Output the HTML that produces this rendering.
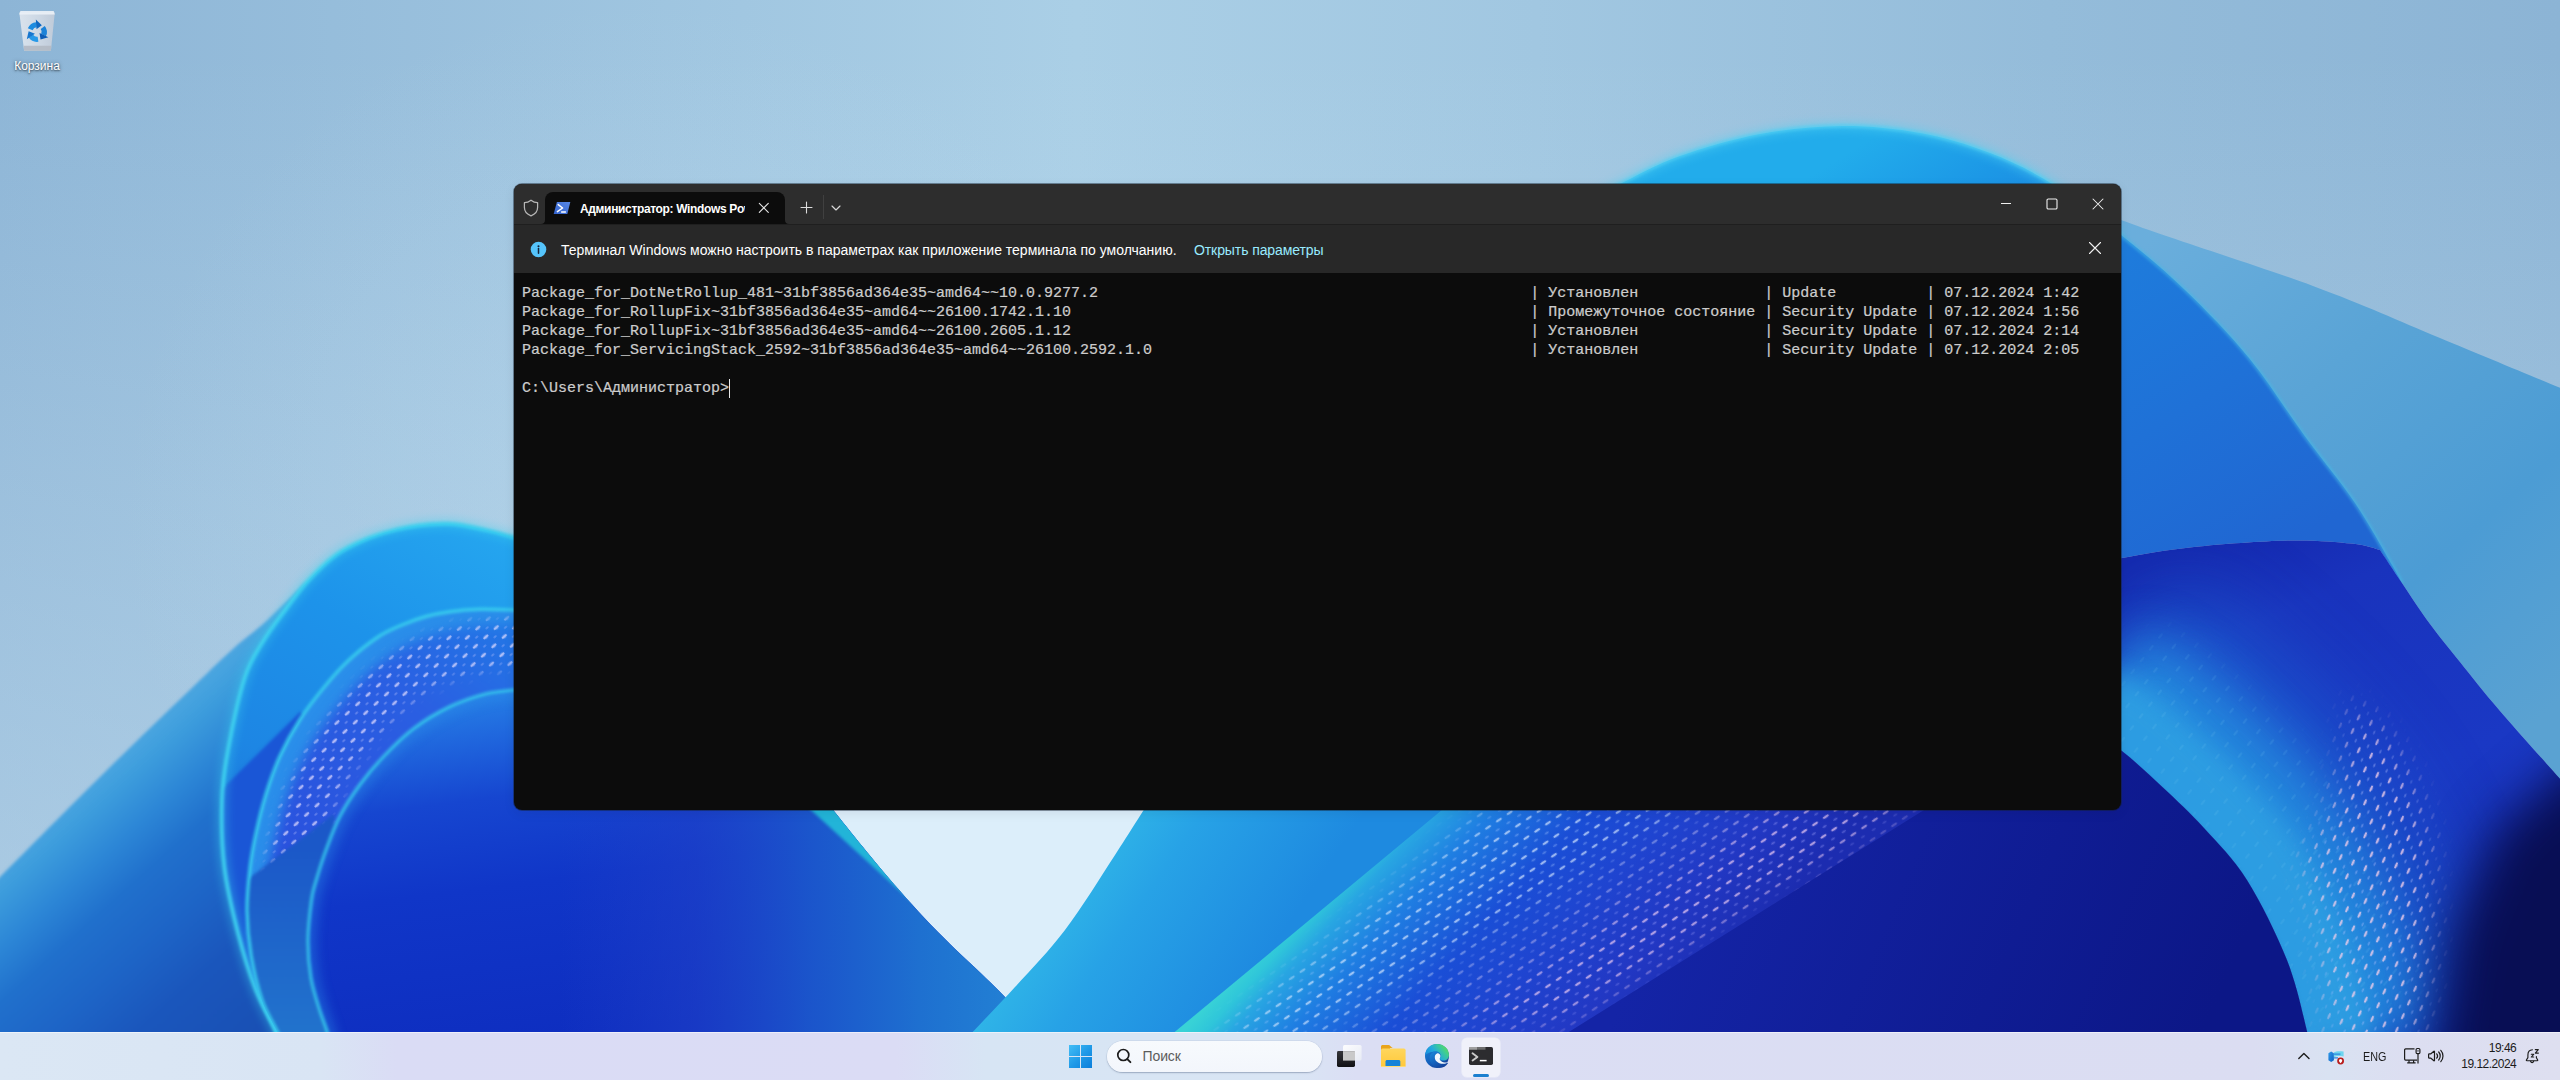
<!DOCTYPE html>
<html lang="ru">
<head>
<meta charset="utf-8">
<title>Рабочий стол</title>
<style>
*{box-sizing:border-box;margin:0;padding:0}
html,body{width:2560px;height:1080px;overflow:hidden;background:#9cc2de}
body{position:relative;font-family:"Liberation Sans","DejaVu Sans",sans-serif;color:#fff}
#wall{position:absolute;left:0;top:0;width:2560px;height:1080px;display:block}
/* desktop icon */
#bin{position:absolute;left:0;top:0;width:74px;height:80px}
#bin svg{position:absolute;left:17px;top:10px}
#bin .lbl{position:absolute;left:0;width:74px;top:59px;text-align:center;font-size:12px;line-height:15px;color:#fff;text-shadow:0 1px 2px rgba(0,0,0,.6),0 0 4px rgba(0,0,0,.35)}
/* window */
#win{position:absolute;left:514px;top:184px;width:1607px;height:626px;border-radius:8px;background:#0c0c0c;overflow:hidden;box-shadow:0 0 0 1px rgba(20,30,45,.45),0 3px 12px rgba(0,0,30,.08)}
#tb{position:absolute;left:0;top:0;width:100%;height:40px;background:#2d2d2d}
#ib{position:absolute;left:0;top:40px;width:100%;height:49px;background:#282828}
#term{position:absolute;left:8px;top:100px;-webkit-text-stroke:.22px #ccc;font-family:"Liberation Mono","DejaVu Sans Mono",monospace;font-size:15px;line-height:19px;color:#cccccc;white-space:pre}
/* taskbar */
#task{position:absolute;left:0;top:1032px;width:2560px;height:48px;background:linear-gradient(90deg,#dbe7f4 0%,#d9e5f4 12.500%,#dadcf5 15.500%,#dbdcf5 35%,#d7e5f4 38.500%,#d9e5f4 50.500%,#dbdef4 53%,#dbddf2 88%,#d9e2f2 91%,#dcdef1 94%,#dedff0 100%)}
</style>
</head>
<body>
<svg id="wall" viewBox="0 0 2560 1080" width="2560" height="1080">
<defs>
<linearGradient id="sky" x1="0" y1="0" x2="2560" y2="0" gradientUnits="userSpaceOnUse">
<stop offset="0" stop-color="#8db5d6"/><stop offset=".42" stop-color="#aacfe6"/><stop offset=".6" stop-color="#a1c7e1"/><stop offset=".8" stop-color="#94bcda"/><stop offset="1" stop-color="#8cb4d5"/>
</linearGradient>
<linearGradient id="skyv" x1="0" y1="50" x2="0" y2="1050" gradientUnits="userSpaceOnUse"><stop offset="0" stop-color="#d0e6f4" stop-opacity="0"/><stop offset="1" stop-color="#d0e6f4" stop-opacity=".5"/></linearGradient>
</defs>
<rect width="2560" height="1080" fill="url(#sky)"/><rect width="2560" height="1080" fill="url(#skyv)"/>
<defs>
<filter id="b2" color-interpolation-filters="sRGB" filterUnits="userSpaceOnUse" x="-100" y="-100" width="2760" height="1280"><feGaussianBlur stdDeviation="1.6"/></filter>
<filter id="b4" color-interpolation-filters="sRGB" filterUnits="userSpaceOnUse" x="-100" y="-100" width="2760" height="1280"><feGaussianBlur stdDeviation="4"/></filter>
<filter id="b6" color-interpolation-filters="sRGB" filterUnits="userSpaceOnUse" x="-100" y="-100" width="2760" height="1280"><feGaussianBlur stdDeviation="6"/></filter>
<filter id="b12" color-interpolation-filters="sRGB" filterUnits="userSpaceOnUse" x="-100" y="-100" width="2760" height="1280"><feGaussianBlur stdDeviation="12"/></filter>
<filter id="b25" color-interpolation-filters="sRGB" filterUnits="userSpaceOnUse" x="-100" y="-100" width="2760" height="1280"><feGaussianBlur stdDeviation="25"/></filter>
<filter id="b45" color-interpolation-filters="sRGB" filterUnits="userSpaceOnUse" x="-100" y="-100" width="2760" height="1280"><feGaussianBlur stdDeviation="45"/></filter>
<radialGradient id="skyglow" cx="640" cy="520" r="520" gradientUnits="userSpaceOnUse"><stop offset="0" stop-color="#c0dcee" stop-opacity=".35"/><stop offset="1" stop-color="#c0dcee" stop-opacity="0"/></radialGradient>
<linearGradient id="gA" x1="60" y1="700" x2="330" y2="1000" gradientUnits="userSpaceOnUse"><stop offset="0" stop-color="#6ab4e2" stop-opacity="0"/><stop offset=".1" stop-color="#56aee4" stop-opacity=".9"/><stop offset=".26" stop-color="#3c9cdc"/><stop offset=".36" stop-color="#2c86d6"/><stop offset=".46" stop-color="#2070cc"/><stop offset=".6" stop-color="#1d64c6"/><stop offset=".74" stop-color="#1a56bc"/><stop offset="1" stop-color="#184eb2"/></linearGradient>
<linearGradient id="gAin" x1="480" y1="520" x2="250" y2="900" gradientUnits="userSpaceOnUse"><stop offset="0" stop-color="#25a6ef"/><stop offset=".35" stop-color="#1d93ea"/><stop offset=".7" stop-color="#1d86e4"/><stop offset="1" stop-color="#1c72d8"/></linearGradient>
<linearGradient id="gC" x1="520" y1="620" x2="280" y2="960" gradientUnits="userSpaceOnUse"><stop offset="0" stop-color="#2278e6"/><stop offset=".3" stop-color="#2a5fe2"/><stop offset=".75" stop-color="#2a52de"/><stop offset="1" stop-color="#2248d2"/></linearGradient>
<linearGradient id="gClow" x1="0" y1="850" x2="0" y2="1030" gradientUnits="userSpaceOnUse"><stop offset="0" stop-color="#1b58c8"/><stop offset="1" stop-color="#2172cc"/></linearGradient>
<linearGradient id="gD" x1="500" y1="690" x2="545" y2="1040" gradientUnits="userSpaceOnUse"><stop offset="0" stop-color="#2680e6"/><stop offset=".12" stop-color="#2068de"/><stop offset=".3" stop-color="#1646d0"/><stop offset=".55" stop-color="#1036c8"/><stop offset="1" stop-color="#0e2ec0"/></linearGradient>
<linearGradient id="gDr" x1="560" y1="0" x2="1010" y2="0" gradientUnits="userSpaceOnUse"><stop offset="0" stop-color="#2040c8" stop-opacity="0"/><stop offset=".3" stop-color="#2042c8" stop-opacity=".55"/><stop offset=".55" stop-color="#1c58cc" stop-opacity=".9"/><stop offset=".8" stop-color="#1e70d0"/><stop offset="1" stop-color="#2280d4"/></linearGradient>
<linearGradient id="gE" x1="1010" y1="860" x2="1230" y2="1010" gradientUnits="userSpaceOnUse"><stop offset="0" stop-color="#3fcdea"/><stop offset=".12" stop-color="#33bde8"/><stop offset=".5" stop-color="#27a2e6"/><stop offset="1" stop-color="#1e8ae0"/></linearGradient>
<linearGradient id="gF" x1="1300" y1="905" x2="1560" y2="1145" gradientUnits="userSpaceOnUse"><stop offset="0" stop-color="#38d2d6"/><stop offset=".045" stop-color="#2fc6da"/><stop offset=".1" stop-color="#28a6e2"/><stop offset=".22" stop-color="#1f7ee2"/><stop offset=".42" stop-color="#1a4ed6"/><stop offset=".6" stop-color="#1f44d0"/><stop offset=".8" stop-color="#2238c4"/><stop offset="1" stop-color="#1c2cb0"/></linearGradient>
<linearGradient id="gNavy" x1="1700" y1="820" x2="2200" y2="1040" gradientUnits="userSpaceOnUse"><stop offset="0" stop-color="#1424a6"/><stop offset="1" stop-color="#0c1787"/></linearGradient>
<linearGradient id="gH" x1="1900" y1="120" x2="2200" y2="600" gradientUnits="userSpaceOnUse"><stop offset="0" stop-color="#22aceb"/><stop offset=".16" stop-color="#1c98e6"/><stop offset=".4" stop-color="#1e7cdc"/><stop offset="1" stop-color="#2066d2"/></linearGradient>
<linearGradient id="gG" x1="2150" y1="240" x2="2560" y2="700" gradientUnits="userSpaceOnUse"><stop offset="0" stop-color="#6aaedc"/><stop offset=".35" stop-color="#5aa4d6"/><stop offset=".7" stop-color="#4c9cd4"/><stop offset="1" stop-color="#5aa2d2"/></linearGradient>
<linearGradient id="gI" x1="2200" y1="540" x2="2420" y2="1040" gradientUnits="userSpaceOnUse"><stop offset="0" stop-color="#1428ae"/><stop offset=".18" stop-color="#1933bd"/><stop offset=".55" stop-color="#1a38c4"/><stop offset="1" stop-color="#1630b4"/></linearGradient>
</defs>
<rect width="2560" height="1080" fill="url(#skyglow)"/>
<path d="M800,800 L1180,800 L1010,1040 L990,1040 Z" fill="#dceefa"/>
<path d="M-40.0,917.0 C-33.3,910.3 -24.0,901.0 0.0,877.0 C24.0,853.0 71.2,805.3 104.0,773.0 C136.8,740.7 175.3,703.8 197.0,683.0 C218.7,662.2 223.2,657.7 234.0,648.0 C244.8,638.3 253.5,632.5 262.0,625.0 C270.5,617.5 277.8,610.0 285.0,603.0 C292.2,596.0 301.7,586.3 305.0,583.0 C305.5,582.7 302.8,585.7 308.0,581.0 C313.2,576.3 326.7,561.8 336.0,555.0 C345.3,548.2 354.8,544.0 364.0,540.0 C373.2,536.0 381.8,533.4 391.0,531.0 C400.2,528.6 408.8,526.7 419.0,525.5 C429.2,524.3 440.2,523.1 452.0,524.0 C463.8,524.9 477.0,528.0 490.0,531.0 C503.0,534.0 523.3,540.2 530.0,542.0 L530.0,1080.0 L-40.0,1080.0 Z" fill="url(#gA)" filter="url(#b2)"/>
<path d="M281.0,1050.0 C280.1,1046.8 279.8,1041.2 275.5,1031.0 C271.2,1020.8 261.8,1005.3 255.5,989.0 C249.2,972.7 243.2,953.3 238.0,933.0 C232.8,912.7 227.1,889.2 224.4,867.0 C221.7,844.8 221.4,819.5 222.0,800.0 C222.6,780.5 224.2,770.5 228.0,750.0 C231.8,729.5 239.0,695.3 245.0,677.0 C251.0,658.7 257.2,651.3 264.0,640.0 C270.8,628.7 278.7,618.8 286.0,609.0 C293.3,599.2 299.7,590.0 308.0,581.0 C316.3,572.0 326.7,561.8 336.0,555.0 C345.3,548.2 354.8,544.0 364.0,540.0 C373.2,536.0 381.8,533.4 391.0,531.0 C400.2,528.6 408.8,526.7 419.0,525.5 C429.2,524.3 440.2,523.1 452.0,524.0 C463.8,524.9 477.0,528.0 490.0,531.0 C503.0,534.0 523.3,540.2 530.0,542.0 L530.0,1040.0 Z" fill="url(#gAin)"/>
<clipPath id="cAin"><path d="M281.0,1050.0 C280.1,1046.8 279.8,1041.2 275.5,1031.0 C271.2,1020.8 261.8,1005.3 255.5,989.0 C249.2,972.7 243.2,953.3 238.0,933.0 C232.8,912.7 227.1,889.2 224.4,867.0 C221.7,844.8 221.4,819.5 222.0,800.0 C222.6,780.5 224.2,770.5 228.0,750.0 C231.8,729.5 239.0,695.3 245.0,677.0 C251.0,658.7 257.2,651.3 264.0,640.0 C270.8,628.7 278.7,618.8 286.0,609.0 C293.3,599.2 299.7,590.0 308.0,581.0 C316.3,572.0 326.7,561.8 336.0,555.0 C345.3,548.2 354.8,544.0 364.0,540.0 C373.2,536.0 381.8,533.4 391.0,531.0 C400.2,528.6 408.8,526.7 419.0,525.5 C429.2,524.3 440.2,523.1 452.0,524.0 C463.8,524.9 477.0,528.0 490.0,531.0 C503.0,534.0 523.3,540.2 530.0,542.0 L530.0,1040.0 Z"/></clipPath>
<g clip-path="url(#cAin)"><path d="M215,796 L300,712 L330,740 L330,1040 L215,1040 Z" fill="#1a56d6" filter="url(#b2)"/></g>
<path d="M281.0,1050.0 C280.1,1046.8 279.8,1041.2 275.5,1031.0 C271.2,1020.8 261.8,1005.3 255.5,989.0 C249.2,972.7 243.2,953.3 238.0,933.0 C232.8,912.7 227.1,889.2 224.4,867.0 C221.7,844.8 221.4,819.5 222.0,800.0 C222.6,780.5 224.2,770.5 228.0,750.0 C231.8,729.5 239.0,695.3 245.0,677.0 C251.0,658.7 257.2,651.3 264.0,640.0 C270.8,628.7 278.7,618.8 286.0,609.0 C293.3,599.2 299.7,590.0 308.0,581.0 C316.3,572.0 326.7,561.8 336.0,555.0 C345.3,548.2 354.8,544.0 364.0,540.0 C373.2,536.0 381.8,533.4 391.0,531.0 C400.2,528.6 408.8,526.7 419.0,525.5 C429.2,524.3 440.2,523.1 452.0,524.0 C463.8,524.9 477.0,528.0 490.0,531.0 C503.0,534.0 523.3,540.2 530.0,542.0" fill="none" stroke="#3ad0ee" stroke-width="11" opacity=".35" filter="url(#b4)"/>
<path d="M281.0,1050.0 C280.1,1046.8 279.8,1041.2 275.5,1031.0 C271.2,1020.8 261.8,1005.3 255.5,989.0 C249.2,972.7 243.2,953.3 238.0,933.0 C232.8,912.7 227.1,889.2 224.4,867.0 C221.7,844.8 221.4,819.5 222.0,800.0 C222.6,780.5 224.2,770.5 228.0,750.0 C231.8,729.5 239.0,695.3 245.0,677.0 C251.0,658.7 257.2,651.3 264.0,640.0 C270.8,628.7 278.7,618.8 286.0,609.0 C293.3,599.2 299.7,590.0 308.0,581.0 C316.3,572.0 326.7,561.8 336.0,555.0 C345.3,548.2 354.8,544.0 364.0,540.0 C373.2,536.0 381.8,533.4 391.0,531.0 C400.2,528.6 408.8,526.7 419.0,525.5 C429.2,524.3 440.2,523.1 452.0,524.0 C463.8,524.9 477.0,528.0 490.0,531.0 C503.0,534.0 523.3,540.2 530.0,542.0" fill="none" stroke="#3fd4f0" stroke-width="3.8" opacity=".95" filter="url(#b2)"/>
<path d="M285.0,1050.0 C283.7,1046.8 280.8,1039.3 277.0,1031.0 C273.2,1022.7 266.3,1012.7 262.0,1000.0 C257.7,987.3 253.5,969.8 251.0,955.0 C248.5,940.2 247.2,925.5 247.0,911.0 C246.8,896.5 248.5,881.0 250.0,868.0 C251.5,855.0 253.3,845.3 256.0,833.0 C258.7,820.7 262.0,806.8 266.0,794.0 C270.0,781.2 274.3,768.4 280.0,756.0 C285.7,743.6 292.8,730.8 300.0,719.5 C307.2,708.2 315.5,697.8 323.5,688.0 C331.5,678.2 338.9,669.5 348.0,661.0 C357.1,652.5 369.0,643.0 378.0,637.0 C387.0,631.0 394.0,628.4 402.0,625.0 C410.0,621.6 418.0,618.7 426.0,616.5 C434.0,614.3 441.0,612.9 450.0,611.7 C459.0,610.5 469.5,609.6 480.0,609.3 C490.5,609.0 504.7,609.7 513.0,610.0 C521.3,610.3 527.2,610.8 530.0,611.0 L530.0,1040.0 Z" fill="#2a8eea"/>
<clipPath id="cC"><path d="M285.0,1050.0 C283.7,1046.8 280.8,1039.3 277.0,1031.0 C273.2,1022.7 266.3,1012.7 262.0,1000.0 C257.7,987.3 253.5,969.8 251.0,955.0 C248.5,940.2 247.2,925.5 247.0,911.0 C246.8,896.5 248.5,881.0 250.0,868.0 C251.5,855.0 253.3,845.3 256.0,833.0 C258.7,820.7 262.0,806.8 266.0,794.0 C270.0,781.2 274.3,768.4 280.0,756.0 C285.7,743.6 292.8,730.8 300.0,719.5 C307.2,708.2 315.5,697.8 323.5,688.0 C331.5,678.2 338.9,669.5 348.0,661.0 C357.1,652.5 369.0,643.0 378.0,637.0 C387.0,631.0 394.0,628.4 402.0,625.0 C410.0,621.6 418.0,618.7 426.0,616.5 C434.0,614.3 441.0,612.9 450.0,611.7 C459.0,610.5 469.5,609.6 480.0,609.3 C490.5,609.0 504.7,609.7 513.0,610.0 C521.3,610.3 527.2,610.8 530.0,611.0 L530.0,1040.0 Z"/></clipPath>
<g clip-path="url(#cC)"><path d="M285.0,1050.0 C283.7,1046.8 280.8,1039.3 277.0,1031.0 C273.2,1022.7 266.3,1012.7 262.0,1000.0 C257.7,987.3 253.5,969.8 251.0,955.0 C248.5,940.2 247.2,925.5 247.0,911.0 C246.8,896.5 248.5,881.0 250.0,868.0 C251.5,855.0 253.3,845.3 256.0,833.0 C258.7,820.7 262.0,806.8 266.0,794.0 C270.0,781.2 274.3,768.4 280.0,756.0 C285.7,743.6 292.8,730.8 300.0,719.5 C307.2,708.2 315.5,697.8 323.5,688.0 C331.5,678.2 338.9,669.5 348.0,661.0 C357.1,652.5 369.0,643.0 378.0,637.0 C387.0,631.0 394.0,628.4 402.0,625.0 C410.0,621.6 418.0,618.7 426.0,616.5 C434.0,614.3 441.0,612.9 450.0,611.7 C459.0,610.5 469.5,609.6 480.0,609.3 C490.5,609.0 504.7,609.7 513.0,610.0 C521.3,610.3 527.2,610.8 530.0,611.0 L530.0,1040.0 Z" fill="url(#gC)" filter="url(#b6)" transform="translate(17,15)"/>
<pattern id="dotC" width="14" height="12" patternUnits="userSpaceOnUse" patternTransform="translate(3,2) rotate(-42)"><ellipse cx="4" cy="3" rx="3.2" ry="1.4" fill="#e2dcff"/><ellipse cx="11" cy="9" rx="2" ry="1" fill="#c4c8ff" opacity=".5"/></pattern>
<mask id="mC" maskUnits="userSpaceOnUse" x="0" y="0" width="2560" height="1080"><path d="M250.0,868.0 C251.0,862.2 253.3,845.3 256.0,833.0 C258.7,820.7 262.0,806.8 266.0,794.0 C270.0,781.2 274.3,768.4 280.0,756.0 C285.7,743.6 292.8,730.8 300.0,719.5 C307.2,708.2 315.5,697.8 323.5,688.0 C331.5,678.2 338.9,669.5 348.0,661.0 C357.1,652.5 369.0,643.0 378.0,637.0 C387.0,631.0 394.0,628.4 402.0,625.0 C410.0,621.6 418.0,618.7 426.0,616.5 C434.0,614.3 441.0,612.9 450.0,611.7 C459.0,610.5 469.5,609.6 480.0,609.3 C490.5,609.0 504.7,609.7 513.0,610.0 C521.3,610.3 527.2,610.8 530.0,611.0" fill="none" stroke="#fff" stroke-width="50" filter="url(#b6)" transform="translate(34,34)"/></mask>
<rect x="240" y="600" width="300" height="330" fill="url(#dotC)" mask="url(#mC)" opacity=".72"/><path d="M236,888 L334,814 L345,1050 L236,1050 Z" fill="url(#gClow)" filter="url(#b2)"/></g>
<path d="M285.0,1050.0 C283.7,1046.8 280.8,1039.3 277.0,1031.0 C273.2,1022.7 266.3,1012.7 262.0,1000.0 C257.7,987.3 253.5,969.8 251.0,955.0 C248.5,940.2 247.2,925.5 247.0,911.0 C246.8,896.5 248.5,881.0 250.0,868.0 C251.5,855.0 253.3,845.3 256.0,833.0 C258.7,820.7 262.0,806.8 266.0,794.0 C270.0,781.2 274.3,768.4 280.0,756.0 C285.7,743.6 292.8,730.8 300.0,719.5 C307.2,708.2 315.5,697.8 323.5,688.0 C331.5,678.2 338.9,669.5 348.0,661.0 C357.1,652.5 369.0,643.0 378.0,637.0 C387.0,631.0 394.0,628.4 402.0,625.0 C410.0,621.6 418.0,618.7 426.0,616.5 C434.0,614.3 441.0,612.9 450.0,611.7 C459.0,610.5 469.5,609.6 480.0,609.3 C490.5,609.0 504.7,609.7 513.0,610.0 C521.3,610.3 527.2,610.8 530.0,611.0" fill="none" stroke="#38cdee" stroke-width="3.4" opacity=".95" filter="url(#b2)"/>
<path d="M331.0,1050.0 C330.3,1046.8 328.8,1037.5 327.0,1031.0 C325.2,1024.5 322.7,1019.8 320.0,1011.0 C317.3,1002.2 313.0,989.8 311.0,978.0 C309.0,966.2 307.9,953.0 308.0,940.0 C308.1,927.0 310.2,909.8 311.5,900.0 C312.8,890.2 313.6,889.3 316.0,881.0 C318.4,872.7 322.0,860.8 326.0,850.0 C330.0,839.2 334.3,826.9 340.0,816.0 C345.7,805.1 352.7,794.5 360.0,784.5 C367.3,774.5 375.2,765.2 384.0,756.0 C392.8,746.8 402.2,737.2 413.0,729.0 C423.8,720.8 437.0,712.8 449.0,707.0 C461.0,701.2 474.3,696.8 485.0,694.0 C495.7,691.2 505.5,691.0 513.0,690.0 C520.5,689.0 527.2,688.3 530.0,688.0 L530.0,810.0 L829.0,805.0 C838.7,816.8 868.8,854.8 887.0,876.0 C905.2,897.2 918.3,911.8 938.0,932.0 C957.7,952.2 988.0,979.0 1005.0,997.0 C1022.0,1015.0 1034.2,1032.8 1040.0,1040.0 Z" fill="url(#gD)"/>
<clipPath id="cD"><path d="M331.0,1050.0 C330.3,1046.8 328.8,1037.5 327.0,1031.0 C325.2,1024.5 322.7,1019.8 320.0,1011.0 C317.3,1002.2 313.0,989.8 311.0,978.0 C309.0,966.2 307.9,953.0 308.0,940.0 C308.1,927.0 310.2,909.8 311.5,900.0 C312.8,890.2 313.6,889.3 316.0,881.0 C318.4,872.7 322.0,860.8 326.0,850.0 C330.0,839.2 334.3,826.9 340.0,816.0 C345.7,805.1 352.7,794.5 360.0,784.5 C367.3,774.5 375.2,765.2 384.0,756.0 C392.8,746.8 402.2,737.2 413.0,729.0 C423.8,720.8 437.0,712.8 449.0,707.0 C461.0,701.2 474.3,696.8 485.0,694.0 C495.7,691.2 505.5,691.0 513.0,690.0 C520.5,689.0 527.2,688.3 530.0,688.0 L530.0,810.0 L829.0,805.0 C838.7,816.8 868.8,854.8 887.0,876.0 C905.2,897.2 918.3,911.8 938.0,932.0 C957.7,952.2 988.0,979.0 1005.0,997.0 C1022.0,1015.0 1034.2,1032.8 1040.0,1040.0 Z"/></clipPath>
<g clip-path="url(#cD)"><rect x="560" y="800" width="500" height="250" fill="url(#gDr)"/>
<path d="M331.0,1050.0 C330.3,1046.8 328.8,1037.5 327.0,1031.0 C325.2,1024.5 322.7,1019.8 320.0,1011.0 C317.3,1002.2 313.0,989.8 311.0,978.0 C309.0,966.2 307.9,953.0 308.0,940.0 C308.1,927.0 310.2,909.8 311.5,900.0 C312.8,890.2 313.6,889.3 316.0,881.0 C318.4,872.7 322.0,860.8 326.0,850.0 C330.0,839.2 334.3,826.9 340.0,816.0 C345.7,805.1 352.7,794.5 360.0,784.5 C367.3,774.5 375.2,765.2 384.0,756.0 C392.8,746.8 402.2,737.2 413.0,729.0 C423.8,720.8 437.0,712.8 449.0,707.0 C461.0,701.2 474.3,696.8 485.0,694.0 C495.7,691.2 505.5,691.0 513.0,690.0 C520.5,689.0 527.2,688.3 530.0,688.0" fill="none" stroke="#2c90ea" stroke-width="16" opacity=".42" filter="url(#b6)"/>
<path d="M800,800 L838,800 L916,906 Z" fill="#22b4d8" filter="url(#b2)"/>
</g>
<path d="M331.0,1050.0 C330.3,1046.8 328.8,1037.5 327.0,1031.0 C325.2,1024.5 322.7,1019.8 320.0,1011.0 C317.3,1002.2 313.0,989.8 311.0,978.0 C309.0,966.2 307.9,953.0 308.0,940.0 C308.1,927.0 310.2,909.8 311.5,900.0 C312.8,890.2 313.6,889.3 316.0,881.0 C318.4,872.7 322.0,860.8 326.0,850.0 C330.0,839.2 334.3,826.9 340.0,816.0 C345.7,805.1 352.7,794.5 360.0,784.5 C367.3,774.5 375.2,765.2 384.0,756.0 C392.8,746.8 402.2,737.2 413.0,729.0 C423.8,720.8 437.0,712.8 449.0,707.0 C461.0,701.2 474.3,696.8 485.0,694.0 C495.7,691.2 505.5,691.0 513.0,690.0 C520.5,689.0 527.2,688.3 530.0,688.0" fill="none" stroke="#36c8ec" stroke-width="3.2" opacity=".9" filter="url(#b2)"/>
<path d="M1150.0,800.0 C1144.2,809.2 1129.2,833.3 1115.0,855.0 C1100.8,876.7 1081.7,908.0 1065.0,930.0 C1048.3,952.0 1031.7,968.7 1015.0,987.0 C998.3,1005.3 973.3,1031.2 965.0,1040.0 L1170,1040 L1455,800 Z" fill="url(#gE)"/>
<path d="M1454,800 L1960,800 L1560,1040 L1165,1040 Z" fill="url(#gF)"/>
<pattern id="dotF" width="13" height="15" patternUnits="userSpaceOnUse" patternTransform="rotate(-34)"><ellipse cx="4" cy="3" rx="3.5" ry="1.3" fill="#d4e6ff"/><ellipse cx="10.500" cy="10.500" rx="2.4" ry="1" fill="#a8c8ff" opacity=".55"/></pattern>
<pattern id="dotF2" width="13" height="15" patternUnits="userSpaceOnUse" patternTransform="rotate(-34)"><ellipse cx="4" cy="3" rx="3.5" ry="1.3" fill="#e6c6f2"/><ellipse cx="10.500" cy="10.500" rx="2.4" ry="1" fill="#a9a8ff" opacity=".55"/></pattern>
<mask id="mF" maskUnits="userSpaceOnUse" x="0" y="0" width="2560" height="1080"><g filter="url(#b12)"><path d="M1500,800 L1700,800 L1310,1040 L1215,1040 Z" fill="#fff" opacity=".95"/><path d="M1700,800 L1790,800 L1410,1040 L1310,1040 Z" fill="#fff" opacity=".3"/></g></mask>
<mask id="mF2" maskUnits="userSpaceOnUse" x="0" y="0" width="2560" height="1080"><g filter="url(#b12)"><path d="M1790,800 L1925,800 L1570,1020 L1430,1040 Z" fill="#fff" opacity=".9"/><path d="M1720,800 L1790,800 L1430,1040 L1350,1040 Z" fill="#fff" opacity=".3"/></g></mask>
<rect x="1150" y="800" width="800" height="240" fill="url(#dotF)" mask="url(#mF)" opacity=".72"/>
<rect x="1150" y="800" width="800" height="240" fill="url(#dotF2)" mask="url(#mF2)" opacity=".8"/>
<path d="M2030.0,180.0 C2045.2,186.7 2073.8,202.3 2121.0,220.0 C2168.2,237.7 2259.8,266.3 2313.0,286.0 C2366.2,305.7 2397.2,320.3 2440.0,338.0 C2482.8,355.7 2548.3,383.0 2570.0,392.0 L2570.0,790.0 C2558.3,776.8 2518.3,732.3 2500.0,711.0 C2481.7,689.7 2471.7,676.5 2460.0,662.0 C2448.3,647.5 2439.7,637.2 2430.0,624.0 C2420.3,610.8 2410.3,595.3 2402.0,583.0 C2393.7,570.7 2383.7,555.5 2380.0,550.0 L2121.0,240.0 Z" fill="url(#gG)"/>
<path d="M1590.0,200.0 C1595.0,197.3 1605.0,191.3 1620.0,184.0 C1635.0,176.7 1656.7,164.3 1680.0,156.0 C1703.3,147.7 1733.0,139.0 1760.0,134.0 C1787.0,129.0 1815.3,126.2 1842.0,126.0 C1868.7,125.8 1895.3,128.5 1920.0,133.0 C1944.7,137.5 1968.0,144.5 1990.0,153.0 C2012.0,161.5 2030.2,170.3 2052.0,184.0 C2073.8,197.7 2098.8,217.3 2121.0,235.0 C2143.2,252.7 2163.7,269.5 2185.0,290.0 C2206.3,310.5 2229.2,333.8 2249.0,358.0 C2268.8,382.2 2286.3,410.8 2304.0,435.0 C2321.7,459.2 2340.3,481.3 2355.0,503.0 C2369.7,524.7 2384.2,551.7 2392.0,565.0 C2399.8,578.3 2400.3,580.0 2402.0,583.0 L2380.0,550.0 C2375.3,548.9 2367.2,545.2 2352.0,543.6 C2336.8,542.0 2315.3,539.9 2289.0,540.5 C2262.7,541.1 2221.8,544.1 2194.0,547.0 C2166.2,549.9 2141.0,554.5 2122.0,558.0 C2103.0,561.5 2087.0,566.3 2080.0,568.0 L2080.0,568.0 L2080.0,400.0 L1590.0,400.0 Z" fill="url(#gH)"/>
<path d="M1590.0,200.0 C1595.0,197.3 1605.0,191.3 1620.0,184.0 C1635.0,176.7 1656.7,164.3 1680.0,156.0 C1703.3,147.7 1733.0,139.0 1760.0,134.0 C1787.0,129.0 1815.3,126.2 1842.0,126.0 C1868.7,125.8 1895.3,128.5 1920.0,133.0 C1944.7,137.5 1968.0,144.5 1990.0,153.0 C2012.0,161.5 2030.2,170.3 2052.0,184.0 C2073.8,197.7 2109.5,226.5 2121.0,235.0" fill="none" stroke="#4fd0f2" stroke-width="10" opacity=".4" filter="url(#b4)"/>
<path d="M1590.0,200.0 C1595.0,197.3 1605.0,191.3 1620.0,184.0 C1635.0,176.7 1656.7,164.3 1680.0,156.0 C1703.3,147.7 1733.0,139.0 1760.0,134.0 C1787.0,129.0 1815.3,126.2 1842.0,126.0 C1868.7,125.8 1895.3,128.5 1920.0,133.0 C1944.7,137.5 1968.0,144.5 1990.0,153.0 C2012.0,161.5 2030.2,170.3 2052.0,184.0 C2073.8,197.7 2109.5,226.5 2121.0,235.0" fill="none" stroke="#52cef2" stroke-width="3.4" opacity=".85" filter="url(#b2)"/>
<path d="M2121.0,235.0 C2131.7,244.2 2163.7,269.5 2185.0,290.0 C2206.3,310.5 2229.2,333.8 2249.0,358.0 C2268.8,382.2 2286.3,410.8 2304.0,435.0 C2321.7,459.2 2340.3,481.3 2355.0,503.0 C2369.7,524.7 2384.2,551.7 2392.0,565.0 C2399.8,578.3 2400.3,580.0 2402.0,583.0" fill="none" stroke="#45b8e6" stroke-width="3" opacity=".7" filter="url(#b2)"/>
<path d="M2080.0,568.0 C2087.0,566.3 2103.0,561.5 2122.0,558.0 C2141.0,554.5 2166.2,549.9 2194.0,547.0 C2221.8,544.1 2262.7,541.1 2289.0,540.5 C2315.3,539.9 2336.8,542.0 2352.0,543.6 C2367.2,545.2 2375.3,548.9 2380.0,550.0 C2383.7,555.5 2393.7,570.7 2402.0,583.0 C2410.3,595.3 2420.3,610.8 2430.0,624.0 C2439.7,637.2 2448.3,647.5 2460.0,662.0 C2471.7,676.5 2481.7,689.7 2500.0,711.0 C2518.3,732.3 2558.3,776.8 2570.0,790.0 L2570.0,1050.0 L2310.0,1050.0 C2309.5,1046.8 2310.8,1046.0 2307.0,1031.0 C2303.2,1016.0 2297.0,985.2 2287.0,960.0 C2277.0,934.8 2260.8,902.0 2247.0,880.0 C2233.2,858.0 2218.0,843.4 2204.0,828.0 C2190.0,812.6 2176.7,800.3 2163.0,787.5 C2149.3,774.7 2135.8,761.9 2122.0,751.0 C2108.2,740.1 2087.0,726.8 2080.0,722.0 Z" fill="url(#gI)"/>
<clipPath id="cI"><path d="M2080.0,568.0 C2087.0,566.3 2103.0,561.5 2122.0,558.0 C2141.0,554.5 2166.2,549.9 2194.0,547.0 C2221.8,544.1 2262.7,541.1 2289.0,540.5 C2315.3,539.9 2336.8,542.0 2352.0,543.6 C2367.2,545.2 2375.3,548.9 2380.0,550.0 C2383.7,555.5 2393.7,570.7 2402.0,583.0 C2410.3,595.3 2420.3,610.8 2430.0,624.0 C2439.7,637.2 2448.3,647.5 2460.0,662.0 C2471.7,676.5 2481.7,689.7 2500.0,711.0 C2518.3,732.3 2558.3,776.8 2570.0,790.0 L2570.0,1050.0 L2310.0,1050.0 C2309.5,1046.8 2310.8,1046.0 2307.0,1031.0 C2303.2,1016.0 2297.0,985.2 2287.0,960.0 C2277.0,934.8 2260.8,902.0 2247.0,880.0 C2233.2,858.0 2218.0,843.4 2204.0,828.0 C2190.0,812.6 2176.7,800.3 2163.0,787.5 C2149.3,774.7 2135.8,761.9 2122.0,751.0 C2108.2,740.1 2087.0,726.8 2080.0,722.0 Z"/></clipPath>
<g clip-path="url(#cI)">
<path d="M2080.0,722.0 C2087.0,726.8 2108.2,740.1 2122.0,751.0 C2135.8,761.9 2149.3,774.7 2163.0,787.5 C2176.7,800.3 2190.0,812.6 2204.0,828.0 C2218.0,843.4 2233.2,858.0 2247.0,880.0 C2260.8,902.0 2277.0,934.8 2287.0,960.0 C2297.0,985.2 2303.2,1016.0 2307.0,1031.0 C2310.8,1046.0 2309.5,1046.8 2310.0,1050.0" fill="none" stroke="#1e62d2" stroke-width="330" opacity=".8" filter="url(#b45)"/>
<path d="M2080.0,722.0 C2087.0,726.8 2108.2,740.1 2122.0,751.0 C2135.8,761.9 2149.3,774.7 2163.0,787.5 C2176.7,800.3 2190.0,812.6 2204.0,828.0 C2218.0,843.4 2233.2,858.0 2247.0,880.0 C2260.8,902.0 2277.0,934.8 2287.0,960.0 C2297.0,985.2 2303.2,1016.0 2307.0,1031.0 C2310.8,1046.0 2309.5,1046.8 2310.0,1050.0" fill="none" stroke="#258cde" stroke-width="225" opacity=".9" filter="url(#b25)"/>
<path d="M2080.0,722.0 C2087.0,726.8 2108.2,740.1 2122.0,751.0 C2135.8,761.9 2149.3,774.7 2163.0,787.5 C2176.7,800.3 2190.0,812.6 2204.0,828.0 C2218.0,843.4 2233.2,858.0 2247.0,880.0 C2260.8,902.0 2277.0,934.8 2287.0,960.0 C2297.0,985.2 2303.2,1016.0 2307.0,1031.0 C2310.8,1046.0 2309.5,1046.8 2310.0,1050.0" fill="none" stroke="#2e9fe2" stroke-width="128" opacity=".92" filter="url(#b12)"/>
<path d="M2428,1090 L2452,930 L2496,830 L2620,720 L2620,1090 Z" fill="#080e54" filter="url(#b25)"/>
<pattern id="dotK" width="15" height="13.5" patternUnits="userSpaceOnUse" patternTransform="rotate(-66)"><ellipse cx="4" cy="3" rx="3.4" ry="1.4" fill="#efcdea"/><ellipse cx="11.500" cy="9.800" rx="2.2" ry="1" fill="#b9c4ff" opacity=".5"/></pattern>
<pattern id="dotK2" width="15" height="17" patternUnits="userSpaceOnUse" patternTransform="rotate(-52)"><ellipse cx="4" cy="3" rx="3.4" ry="1.3" fill="#7fd0f4"/></pattern>
<mask id="mK" maskUnits="userSpaceOnUse" x="0" y="0" width="2560" height="1080"><path d="M2350,700 C2395,730 2432,800 2432,880 C2434,960 2425,1010 2415,1045 L2330,1045 C2322,960 2312,900 2302,860 C2340,800 2345,750 2350,700 Z" fill="#fff" filter="url(#b12)"/></mask>
<mask id="mK2" maskUnits="userSpaceOnUse" x="0" y="0" width="2560" height="1080"><path d="M2080.0,722.0 C2087.0,726.8 2108.2,740.1 2122.0,751.0 C2135.8,761.9 2149.3,774.7 2163.0,787.5 C2176.7,800.3 2190.0,812.6 2204.0,828.0 C2218.0,843.4 2233.2,858.0 2247.0,880.0 C2260.8,902.0 2277.0,934.8 2287.0,960.0 C2297.0,985.2 2303.2,1016.0 2307.0,1031.0 C2310.8,1046.0 2309.5,1046.8 2310.0,1050.0" fill="none" stroke="#fff" stroke-width="130" opacity=".5" filter="url(#b12)" transform="translate(45,-45)"/></mask>
<rect x="2100" y="600" width="400" height="440" fill="url(#dotK2)" mask="url(#mK2)" opacity=".28"/><rect x="2250" y="660" width="220" height="380" fill="url(#dotK)" mask="url(#mK)" opacity=".78"/>
</g>
<path d="M2080.0,722.0 C2087.0,726.8 2108.2,740.1 2122.0,751.0 C2135.8,761.9 2149.3,774.7 2163.0,787.5 C2176.7,800.3 2190.0,812.6 2204.0,828.0 C2218.0,843.4 2233.2,858.0 2247.0,880.0 C2260.8,902.0 2277.0,934.8 2287.0,960.0 C2297.0,985.2 2303.2,1016.0 2307.0,1031.0 C2310.8,1046.0 2309.5,1046.8 2310.0,1050.0" fill="none" stroke="#2a90d8" stroke-width="2" opacity=".55" filter="url(#b2)"/>
<path d="M2080.0,722.0 C2087.0,726.8 2108.2,740.1 2122.0,751.0 C2135.8,761.9 2149.3,774.7 2163.0,787.5 C2176.7,800.3 2190.0,812.6 2204.0,828.0 C2218.0,843.4 2233.2,858.0 2247.0,880.0 C2260.8,902.0 2277.0,934.8 2287.0,960.0 C2297.0,985.2 2303.2,1016.0 2307.0,1031.0 C2310.8,1046.0 2309.5,1046.8 2310.0,1050.0 L1540.0,1050.0 L1940.0,800.0 L2080.0,800.0 Z" fill="url(#gNavy)"/>
</svg>

<div id="bin"><svg width="40" height="44" viewBox="0 0 40 44"><defs><linearGradient id="bn1" x1="0" y1="0" x2="1" y2="0"><stop offset="0" stop-color="#dfe6ee"/><stop offset=".5" stop-color="#d2dbe6"/><stop offset="1" stop-color="#c3ccd9"/></linearGradient><filter id="bnb" x="-10%" y="-10%" width="120%" height="120%"><feGaussianBlur stdDeviation=".55"/></filter></defs>
<g filter="url(#bnb)"><path d="M2.300 2.600 L37.800 2.600 L33.900 40.800 L7.100 40.800 Z" fill="url(#bn1)" opacity=".93"/><path d="M3.400 .900 L36.700 .900 L37.800 4.400 L2.300 4.400 Z" fill="#e9eff5" opacity=".95"/><path d="M6.600 35.800 L34.400 35.800 L33.900 40.800 L7.100 40.800 Z" fill="#b4bac4" opacity=".9"/>
<path d="M13.23 19.27 A7.3 7.3 0 0 1 19.49 14.72" fill="none" stroke="#1d8ce0" stroke-width="5.200"/>
<path d="M18.83 9.55 L19.51 19.33 L24.83 15.15 Z" fill="#0e68c2"/>
<path d="M25.75 17.51 A7.3 7.3 0 0 1 26.56 25.20" fill="none" stroke="#1a82d8" stroke-width="5.200"/>
<path d="M31.37 27.21 L22.56 22.91 L23.52 29.61 Z" fill="#0b5cb6"/>
<path d="M21.02 29.23 A7.3 7.3 0 0 1 13.95 26.08" fill="none" stroke="#2699e8" stroke-width="5.200"/>
<path d="M9.80 29.24 L17.93 23.76 L11.65 21.24 Z" fill="#1276cf"/></g></svg><div class="lbl">Корзина</div></div>

<div id="win">
<div id="tb"><svg style="position:absolute;left:8px;top:14px" width="18" height="20" viewBox="0 0 18 20"><path d="M9 2.2 C6.8 3.9 4.6 4.6 2.4 4.7 L2.4 9.6 C2.4 13.6 5 16.4 9 17.9 C13 16.4 15.6 13.6 15.6 9.6 L15.6 4.7 C13.4 4.6 11.2 3.9 9 2.2 Z" fill="none" stroke="#b6b6b6" stroke-width="1.25" stroke-linejoin="round"/></svg>
<div style="position:absolute;left:31px;top:8px;width:240px;height:32px;background:#0c0c0c;border-radius:8px 8px 0 0"></div>
<svg style="position:absolute;left:27px;top:36px" width="248" height="4" viewBox="0 0 248 4"><path d="M0 4 C2.400 4 4 2.400 4 0 L4 4 Z M248 4 C245.600 4 244 2.400 244 0 L244 4 Z" fill="#0c0c0c"/></svg>
<svg style="position:absolute;left:39px;top:17px" width="18" height="14" viewBox="0 0 18 14"><defs><linearGradient id="psg" x1="0" y1="1" x2="1" y2="0"><stop offset="0" stop-color="#3464cf"/><stop offset="1" stop-color="#5787e6"/></linearGradient></defs><path d="M3.9 1.1 L17.3 1.1 L14.3 13 L0.7 13 Z" fill="url(#psg)"/><path d="M5.2 3.6 L9.6 7 L4.4 10.6" fill="none" stroke="#fff" stroke-width="1.5" stroke-linecap="round" stroke-linejoin="round"/><path d="M8.6 10.9 L12.4 10.9" stroke="#fff" stroke-width="1.5" stroke-linecap="round"/></svg>
<div style="position:absolute;left:66px;top:15.500px;width:165px;height:18px;overflow:hidden;white-space:nowrap;font-size:12px;line-height:18px;font-weight:700;letter-spacing:-.35px;color:#fff">Администратор: Windows PowerShell</div>
<svg style="position:absolute;left:244px;top:18px" width="12" height="12" viewBox="0 0 12 12"><path d="M1.3 1.3 L10.3 10.3 M10.3 1.3 L1.3 10.3" stroke="#e6e6e6" stroke-width="1.1" stroke-linecap="round"/></svg>
<svg style="position:absolute;left:286px;top:17px" width="14" height="14" viewBox="0 0 14 14"><path d="M6.5 1 L6.500 12 M1 6.500 L12 6.500" stroke="#dcdcdc" stroke-width="1.1" stroke-linecap="round"/></svg>
<div style="position:absolute;left:308.500px;top:11px;width:1px;height:24px;background:#404040"></div>
<svg style="position:absolute;left:316px;top:19px" width="12" height="10" viewBox="0 0 12 10"><path d="M2 3 L6 7 L10 3" fill="none" stroke="#d8d8d8" stroke-width="1.15" stroke-linecap="round" stroke-linejoin="round"/></svg>
<svg style="position:absolute;left:1486px;top:13px" width="12" height="12" viewBox="0 0 12 12"><path d="M1 6.5 L11 6.5" stroke="#f0f0f0" stroke-width="1"/></svg>
<svg style="position:absolute;left:1532px;top:14px" width="12" height="12" viewBox="0 0 12 12"><rect x="1" y="1" width="10" height="10" rx="1.3" fill="none" stroke="#f0f0f0" stroke-width="1.1"/></svg>
<svg style="position:absolute;left:1578px;top:14px" width="12" height="12" viewBox="0 0 12 12"><path d="M1 1 L11 11 M11 1 L1 11" stroke="#f0f0f0" stroke-width="1.05" stroke-linecap="round"/></svg></div>
<div id="ib"><div style="position:absolute;left:0;top:0;width:100%;height:1px;background:rgba(0,0,0,.22)"></div>
<svg style="position:absolute;left:16px;top:17px" width="17" height="17" viewBox="0 0 17 17"><circle cx="8.5" cy="8.5" r="7.8" fill="#55c4fb"/><circle cx="8.5" cy="5.2" r="1.05" fill="#14233a"/><path d="M8.5 7.6 L8.5 12.2" stroke="#14233a" stroke-width="1.5" stroke-linecap="round"/></svg>
<div style="position:absolute;left:47px;top:16px;height:20px;font-size:14px;line-height:20px;white-space:nowrap;color:#fff" id="ibt"><span id="ibm">Терминал Windows можно настроить в параметрах как приложение терминала по умолчанию.</span><span id="ibl" style="color:#99ebff;letter-spacing:-.09px;position:absolute;left:633px;top:0">Открыть параметры</span></div>
<svg style="position:absolute;left:1574px;top:17px" width="14" height="14" viewBox="0 0 14 14"><path d="M1.5 1.5 L12.5 12.5 M12.5 1.5 L1.5 12.5" stroke="#f0f0f0" stroke-width="1.1" stroke-linecap="round"/></svg></div>
<div id="term">Package_for_DotNetRollup_481~31bf3856ad364e35~amd64~~10.0.9277.2                                                | Установлен              | Update          | 07.12.2024 1:42
Package_for_RollupFix~31bf3856ad364e35~amd64~~26100.1742.1.10                                                   | Промежуточное состояние | Security Update | 07.12.2024 1:56
Package_for_RollupFix~31bf3856ad364e35~amd64~~26100.2605.1.12                                                   | Установлен              | Security Update | 07.12.2024 2:14
Package_for_ServicingStack_2592~31bf3856ad364e35~amd64~~26100.2592.1.0                                          | Установлен              | Security Update | 07.12.2024 2:05

C:\Users\Администратор&gt;<span style="position:absolute;left:207px;top:95px;width:1px;height:19px;background:#e8e8e8"></span></div>
</div>

<div id="task"><div style="position:absolute;left:0;top:0;width:2560px;height:1px;background:rgba(255,255,255,.5)"></div>
<svg style="position:absolute;left:1069px;top:13px" width="23" height="23" viewBox="0 0 23 23"><defs><linearGradient id="wlg" x1="0" y1="0" x2="1" y2="1"><stop offset="0" stop-color="#43bef6"/><stop offset=".5" stop-color="#219be8"/><stop offset="1" stop-color="#0a7edb"/></linearGradient></defs><path d="M0 0H11V11H0Z M12 0H23V11H12Z M0 12H11V23H0Z M12 12H23V23H12Z" fill="url(#wlg)"/></svg>
<div style="position:absolute;left:1107px;top:8.500px;width:215px;height:31px;border-radius:15.500px;background:linear-gradient(180deg,#f7fafd,#f3f6fc);box-shadow:0 1px 1.5px rgba(70,90,120,.38),0 0 0 .5px rgba(120,140,170,.18)"></div>
<svg style="position:absolute;left:1115px;top:15px" width="18" height="18" viewBox="0 0 18 18"><circle cx="8.3" cy="8" r="5.5" fill="none" stroke="#1c1c1c" stroke-width="1.7"/><path d="M12.300 12.100 L15.400 15.200" stroke="#1c1c1c" stroke-width="1.9" stroke-linecap="round"/></svg>
<div id="srch" style="position:absolute;left:1142.500px;top:14px;font-size:14px;line-height:20px;color:#5c5c5c;letter-spacing:-.1px">Поиск</div>
<!-- task view -->
<svg style="position:absolute;left:1335px;top:11px" width="30" height="26" viewBox="0 0 30 26"><defs><linearGradient id="tv1" x1="0" y1="0" x2="1" y2="1"><stop offset="0" stop-color="#ffffff"/><stop offset="1" stop-color="#e9edf5"/></linearGradient><linearGradient id="tv2" x1="0" y1="0" x2="0" y2="1"><stop offset="0" stop-color="#35353a"/><stop offset="1" stop-color="#111114"/></linearGradient></defs><rect x="8" y="2" width="18.600" height="15.600" rx="1.6" fill="url(#tv1)" opacity=".92"/><rect x="2" y="8.100" width="18" height="15.900" rx="1.4" fill="url(#tv2)"/><path d="M8 8.100 H20 V17.600 H8 Z" fill="#c9c9c9"/></svg>
<!-- explorer -->
<svg style="position:absolute;left:1379px;top:11px" width="30" height="26" viewBox="0 0 30 26"><defs><linearGradient id="fd1" x1="0" y1="0" x2="0" y2="1"><stop offset="0" stop-color="#ffd65c"/><stop offset="1" stop-color="#ffc83a"/></linearGradient></defs><path d="M2 3.700 C2 2.800 2.700 2.100 3.600 2.100 H9.600 C10.300 2.100 10.800 2.400 11.300 2.900 L12.600 4.300 C13 4.700 13.400 4.900 14 4.900 H2 Z" fill="#e9a51c"/><path d="M2 3.600 H11 V7 H2 Z" fill="#e9a51c"/><rect x="2" y="5.600" width="24.600" height="18.400" rx="1.600" fill="url(#fd1)"/><path d="M6.500 22.900 V18.400 C6.500 17.500 7.200 16.900 8.100 16.900 H19.700 C20.600 16.900 21.300 17.500 21.300 18.400 V22.900 Z" fill="#1583d8"/><path d="M2 22.900 H26.600 V23 C26.600 23.600 26.100 24 25.600 24 H3 C2.400 24 2 23.600 2 23 Z" fill="#ffdb72"/></svg>
<!-- edge -->
<svg style="position:absolute;left:1424px;top:11px" width="26" height="26" viewBox="0 0 26 26"><defs><linearGradient id="ed1" x1="0" y1="0" x2="1" y2="1"><stop offset="0" stop-color="#2aa7e6"/><stop offset="1" stop-color="#0c55a6"/></linearGradient><linearGradient id="ed2" x1="0" y1=".75" x2="1" y2=".2"><stop offset="0" stop-color="#1488dc"/><stop offset=".42" stop-color="#23a9de"/><stop offset=".72" stop-color="#3ccb98"/><stop offset="1" stop-color="#62de50"/></linearGradient><linearGradient id="ed3" x1=".1" y1="0" x2=".8" y2="1"><stop offset="0" stop-color="#1a86d8"/><stop offset=".55" stop-color="#1460bc"/><stop offset="1" stop-color="#133c94"/></linearGradient></defs><circle cx="13" cy="13" r="12" fill="url(#ed3)"/><path d="M1.100 12.200 C1.600 5.800 6.800 1 13 1 C19.800 1 25 6 25 11.800 C25 15.400 22.500 17.600 19.500 17.600 C17.200 17.600 15.700 16.600 15.700 15.500 C15.700 14.700 16.700 14.300 16.700 12.700 C16.700 10.400 14.500 8.600 11.500 8.600 C6.800 8.600 2.400 11 1.100 12.200 Z" fill="url(#ed2)"/><path d="M11.500 8.600 C8.300 8.800 5.600 11.700 5.600 15.300 C5.600 20.400 9.900 24.500 15.600 24.700 C19 24.800 22 23.200 23.800 20.400 C24.100 19.900 23.700 19.500 23.200 19.800 C21.900 20.500 20.500 20.800 19 20.800 C14.300 20.800 10.800 18.200 10.800 14.300 C10.800 12.500 11.700 11.200 12.900 10.500 C14.200 9.900 15.700 10.400 16.500 11.500 C15.900 9.700 14 8.500 11.500 8.600 Z" fill="url(#ed3)"/><path d="M12.900 10.600 C11.500 11.400 10.800 12.800 10.800 14.300 C10.800 17.700 13.700 20.300 17.600 20.700 C20.300 21 22.500 20.300 23.800 19.400 C21.600 19.900 18.600 19.500 17 18.100 C15.800 17.100 15.400 15.800 16 14.700 C16.700 13.400 16.600 12.200 15.700 11.200 C15 10.400 13.800 10.100 12.900 10.600 Z" fill="#f2f8fe"/></svg>
<!-- terminal -->
<div style="position:absolute;left:1462px;top:5.500px;width:38px;height:39px;border-radius:5px;background:rgba(255,255,255,.58);box-shadow:0 0 0 .6px rgba(255,255,255,.5)"></div>
<svg style="position:absolute;left:1467px;top:13px" width="28" height="22" viewBox="0 0 28 22"><rect x="2" y="2" width="24" height="18" rx="1.700" fill="#2c2c2f"/><path d="M2 3.700 C2 2.700 2.700 2 3.700 2 H10 V4.700 H2 Z" fill="#a0a0a0"/><rect x="10" y="2" width="8.500" height="2.700" fill="#6e6e6e"/><path d="M5.500 8.200 L10.400 11.900 L5.600 15.500" fill="none" stroke="#c9c9c9" stroke-width="1.900" stroke-linecap="round" stroke-linejoin="round"/><path d="M12.800 15.600 H19.600" stroke="#fff" stroke-width="1.500"/></svg>
<div style="position:absolute;left:1473px;top:42px;width:16px;height:3px;border-radius:1.500px;background:#1b7fcf"></div>
<!-- tray -->
<svg style="position:absolute;left:2296px;top:18px" width="16" height="12" viewBox="0 0 16 12"><path d="M2.800 8.400 L7.900 3.400 L13 8.400" fill="none" stroke="#1c1c1c" stroke-width="1.400" stroke-linecap="round" stroke-linejoin="round"/></svg>
<svg style="position:absolute;left:2326px;top:17px" width="22" height="18" viewBox="0 0 22 18"><defs><linearGradient id="tr1" x1="0" y1="0" x2="1" y2="1"><stop offset="0" stop-color="#2f9bea"/><stop offset="1" stop-color="#0d5fc4"/></linearGradient></defs><path d="M2.400 4.200 L5.200 2.400 L7.900 4.200 V11.200 L5.200 13 L2.400 11.200 Z" fill="url(#tr1)"/><path d="M7.900 3.600 C10 2 13.500 1.800 17.600 2.600 L17.600 7.400 C13.500 6.800 10 7 7.900 8.300 Z" fill="#5fd4ee" opacity=".9"/><path d="M7.900 5.200 H14.500 M7.900 8.800 H12" stroke="#2f86de" stroke-width="1.300"/><circle cx="14.600" cy="12" r="3.400" fill="#b81c1c"/><path d="M14.600 9.900 C15.600 9.900 16.200 10.700 16.200 11.600 C16.200 12.700 15.400 13.300 14.600 14.200 C13.800 13.300 13 12.700 13 11.600 C13 10.700 13.600 9.900 14.600 9.900 Z" fill="#fff"/></svg>
<div id="eng" style="position:absolute;left:2362.500px;top:17px;font-size:12px;line-height:16px;color:#1b1b1b;transform:scaleX(.9);transform-origin:0 50%">ENG</div>
<svg style="position:absolute;left:2402px;top:14px" width="22" height="20" viewBox="0 0 22 20"><g fill="none" stroke="#1c1c1c" stroke-width="1.200" stroke-linejoin="round"><path d="M12.500 2.900 H3.600 C3 2.900 2.600 3.300 2.600 3.900 V13.100 C2.600 13.700 3 14.100 3.600 14.100 H15.100"/><path d="M7 14.300 V16.600 M11.600 14.300 V16.600 M5.200 16.800 H13.600"/><rect x="14.100" y="2.500" width="3.800" height="5.200" rx="1.200"/><path d="M16 7.800 V17.400"/><path d="M16 4.200 V5.600" stroke-width="1"/></g></svg>
<svg style="position:absolute;left:2426px;top:15px" width="20" height="18" viewBox="0 0 20 18"><g fill="none" stroke="#1c1c1c" stroke-width="1.200" stroke-linecap="round" stroke-linejoin="round"><path d="M7.900 4.300 L4.900 6.800 H3.300 C2.900 6.800 2.600 7.100 2.600 7.500 V10.500 C2.600 10.900 2.900 11.200 3.300 11.200 H4.900 L7.900 13.700 C8.200 13.900 8.500 13.800 8.500 13.400 V4.600 C8.500 4.200 8.200 4.100 7.900 4.300 Z"/><path d="M10.700 6.800 C11.700 8 11.700 10 10.700 11.200"/><path d="M12.700 5 C14.700 7.200 14.700 10.800 12.700 13"/><path d="M14.800 3.300 C17.700 6.400 17.700 11.600 14.800 14.700"/></g></svg>
<div id="clk" style="position:absolute;left:2440px;width:76.300px;top:8px;text-align:right;font-size:12px;line-height:16px;color:#1b1b1b;letter-spacing:-.5px;white-space:nowrap"><span id="tm">19:46</span><br><span id="dt">19.12.2024</span></div>
<svg style="position:absolute;left:2523px;top:14px" width="20" height="20" viewBox="0 0 20 20"><g fill="none" stroke="#1c1c1c" stroke-width="1.150" stroke-linecap="round" stroke-linejoin="round"><path d="M9.400 3.800 C6.600 4 4.900 6.300 4.900 8.900 V11.600 L3.400 14 C3.200 14.400 3.400 14.700 3.800 14.700 H14.300 C14.700 14.700 14.900 14.400 14.700 14 L13.400 11.700 V10.600"/><path d="M7.600 15.300 C7.900 16.200 8.500 16.600 9.100 16.600 C9.700 16.600 10.300 16.200 10.600 15.300"/><path d="M8.300 8.300 H10.700 L8.300 11 H10.700" stroke-width="1.100"/><path d="M12.300 3.600 H15.300 L12.300 7.100 H15.400" stroke-width="1.150"/></g></svg></div>
</body>
</html>
